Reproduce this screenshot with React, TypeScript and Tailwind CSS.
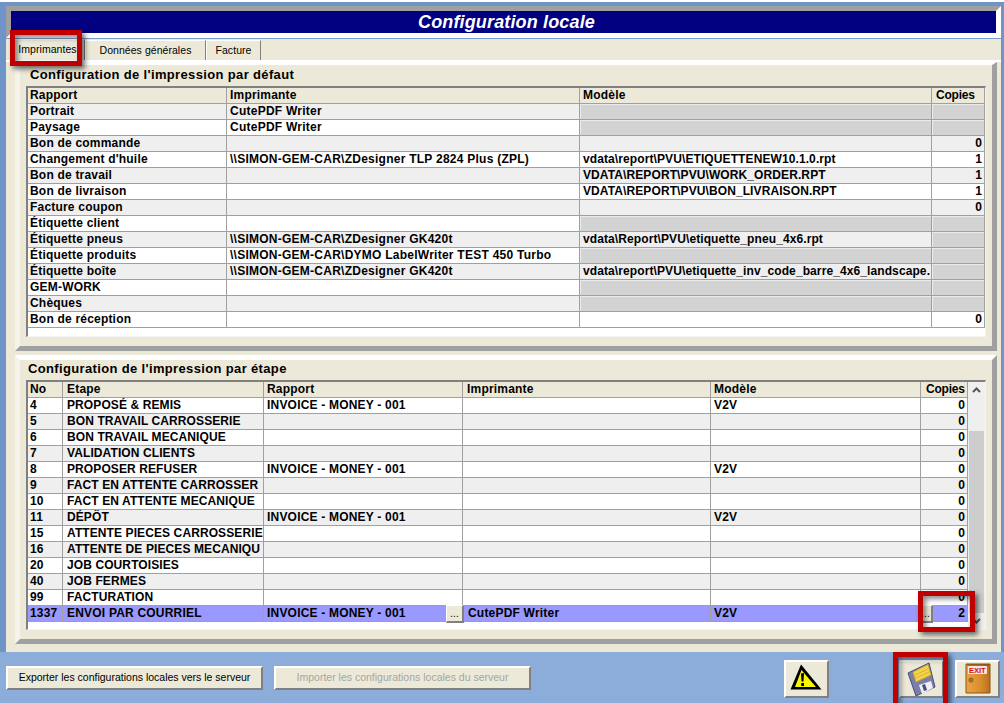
import React from 'react';

type Row = { name: string; printer?: string; model?: string; copies?: string; off?: boolean };

const defaultRows: Row[] = [
  { name: 'Portrait', printer: 'CutePDF Writer', off: true },
  { name: 'Paysage', printer: 'CutePDF Writer', off: true },
  { name: 'Bon de commande', copies: '0' },
  { name: "Changement d'huile", printer: '\\\\SIMON-GEM-CAR\\ZDesigner TLP 2824 Plus (ZPL)', model: 'vdata\\report\\PVU\\ETIQUETTENEW10.1.0.rpt', copies: '1' },
  { name: 'Bon de travail', model: 'VDATA\\REPORT\\PVU\\WORK_ORDER.RPT', copies: '1' },
  { name: 'Bon de livraison', model: 'VDATA\\REPORT\\PVU\\BON_LIVRAISON.RPT', copies: '1' },
  { name: 'Facture coupon', copies: '0' },
  { name: 'Étiquette client', off: true },
  { name: 'Étiquette pneus', printer: '\\\\SIMON-GEM-CAR\\ZDesigner GK420t', model: 'vdata\\Report\\PVU\\etiquette_pneu_4x6.rpt', off: true },
  { name: 'Étiquette produits', printer: '\\\\SIMON-GEM-CAR\\DYMO LabelWriter TEST 450 Turbo', off: true },
  { name: 'Étiquette boîte', printer: '\\\\SIMON-GEM-CAR\\ZDesigner GK420t', model: 'vdata\\report\\PVU\\etiquette_inv_code_barre_4x6_landscape.', off: true },
  { name: 'GEM-WORK', off: true },
  { name: 'Chèques', off: true },
  { name: 'Bon de réception', copies: '0' },
];

const stepRows = [
  ['4', 'PROPOSÉ & REMIS', 'INVOICE - MONEY - 001', 'V2V'],
  ['5', 'BON TRAVAIL CARROSSERIE', '', ''],
  ['6', 'BON TRAVAIL MECANIQUE', '', ''],
  ['7', 'VALIDATION CLIENTS', '', ''],
  ['8', 'PROPOSER REFUSER', 'INVOICE - MONEY - 001', 'V2V'],
  ['9', 'FACT EN ATTENTE CARROSSER', '', ''],
  ['10', 'FACT EN ATTENTE MECANIQUE', '', ''],
  ['11', 'DÉPÔT', 'INVOICE - MONEY - 001', 'V2V'],
  ['15', 'ATTENTE PIECES CARROSSERIE', '', ''],
  ['16', 'ATTENTE DE PIECES MECANIQU', '', ''],
  ['20', 'JOB COURTOISIES', '', ''],
  ['40', 'JOB FERMES', '', ''],
  ['99', 'FACTURATION', '', ''],
];

const cell = 'h-[16px] border-r border-b border-[#a0a0a0] px-[2px] leading-[15px] whitespace-nowrap overflow-hidden';
const offCell = 'bg-[#d3d3d3] shadow-[inset_1px_1px_0_#ebebeb]';
const gridOne = 'grid grid-cols-[199px_353px_352px_53px]';
const gridTwo = 'grid grid-cols-[35px_201px_199px_248px_210px_47px]';

function Group({ className, children }: { className: string; children: React.ReactNode }) {
  return (
    <div className={`flex flex-col border-[5px] border-t-white border-l-[#f6f4ea] border-r-[#a0a0a0] border-b-[#a0a0a0] ${className}`}>
      {children}
    </div>
  );
}

function DefaultTable() {
  return (
    <div className="mx-[6px] flex h-[251px] flex-col border-t-2 border-l-2 border-[#808080] bg-white border-r border-b border-r-[#f4f4f4] border-b-[#f4f4f4]">
      <div className={`${gridOne} bg-[#ece9d8]`}>
        <div className={cell}>Rapport</div>
        <div className={`${cell} !pl-[3px]`}>Imprimante</div>
        <div className={`${cell} !pl-[3px]`}>Modèle</div>
        <div className={`${cell} !pl-[4px] tracking-[-0.2px]`}>Copies</div>
      </div>
      {defaultRows.map((r, i) => (
        <div key={r.name} className={`${gridOne} ${i % 2 === 0 ? 'bg-[#efefef]' : 'bg-white'}`}>
          <div className={cell}>{r.name}</div>
          <div className={`${cell} !pl-[3px] tracking-[0.25px]`}>{r.printer}</div>
          <div className={`${cell} !pl-[3px] tracking-[0.1px] ${r.off && !r.model ? offCell : ''}`}>{r.model}</div>
          <div className={`${cell} text-right ${r.off ? offCell : ''}`}>{r.copies}</div>
        </div>
      ))}
    </div>
  );
}

function StepTable() {
  return (
    <div className="mx-[6px] flex h-[250px] border-t-2 border-l-2 border-[#808080] bg-white border-r border-b border-r-[#f4f4f4] border-b-[#f4f4f4]">
      <div className="flex w-[940px] flex-col">
        <div className={`${gridTwo} bg-[#ece9d8]`}>
          <div className={cell}>No</div>
          <div className={`${cell} !pl-[4px]`}>Etape</div>
          <div className={`${cell} !pl-[3px]`}>Rapport</div>
          <div className={`${cell} !pl-[4px]`}>Imprimante</div>
          <div className={`${cell} !pl-[3px]`}>Modèle</div>
          <div className={`${cell} !pl-[5px] tracking-[-0.2px]`}>Copies</div>
        </div>
        {stepRows.map((r, i) => (
          <div key={r[0]} className={`${gridTwo} ${i % 2 === 0 ? 'bg-white' : 'bg-[#efefef]'}`}>
            <div className={cell}>{r[0]}</div>
            <div className={`${cell} !pl-[4px] tracking-[0.1px]`}>{r[1]}</div>
            <div className={`${cell} !pl-[3px]`}>{r[2]}</div>
            <div className={cell}></div>
            <div className={`${cell} !pl-[3px]`}>{r[3]}</div>
            <div className={`${cell} text-right`}>0</div>
          </div>
        ))}
        <div className={`${gridTwo} bg-[#9999ff]`}>
          <div className={cell}>1337</div>
          <div className={`${cell} !pl-[4px]`}>ENVOI PAR COURRIEL</div>
          <div className={`${cell} relative !overflow-visible !pl-[3px]`}>
            INVOICE - MONEY - 001
            <EllipsisButton className="right-[-2px]" />
          </div>
          <div className={`${cell} !pl-[5px]`}>CutePDF Writer</div>
          <div className={`${cell} !pl-[3px]`}>V2V</div>
          <div className={`${cell} relative !overflow-visible text-right`}>
            <EllipsisButton className="left-[-2px] !w-[14px]" />
            2
          </div>
        </div>
      </div>
      <div className="flex w-[17px] flex-col bg-[#efefef]">
        <svg viewBox="0 0 17 16" className="h-[16px] w-[17px] shrink-0">
          <path d="M5 10 L8.5 6.5 L12 10" fill="none" stroke="#555" strokeWidth="2" />
        </svg>
        <div className="mt-[33px] ml-px h-[182px] w-[15px] shrink-0 bg-[#cdcdcd]" />
        <svg viewBox="0 0 17 16" className="h-[16px] w-[17px] shrink-0">
          <path d="M5 6 L8.5 9.5 L12 6" fill="none" stroke="#555" strokeWidth="2" />
        </svg>
      </div>
    </div>
  );
}

function EllipsisButton({ className }: { className: string }) {
  return (
    <div className={`absolute top-[-1px] z-10 flex h-[18px] w-[18px] items-end justify-center border-t border-l border-t-white border-l-white border-r-2 border-b-2 border-r-[#808080] border-b-[#808080] bg-[#ece9d8] text-[10px] leading-[14px] font-normal ${className}`}>
      ...
    </div>
  );
}

function Callout({ className }: { className: string }) {
  return (
    <div className={`pointer-events-none absolute z-20 border-[5px] border-[#c00000] shadow-[3px_3px_5px_rgba(0,0,0,0.55),inset_3px_3px_5px_rgba(0,0,0,0.45)] ${className}`} />
  );
}

function IconButton({ children }: { children: React.ReactNode }) {
  return (
    <div className="h-[38px] w-[45px] border-t-2 border-l-2 border-t-white border-l-white border-r-2 border-b-2 border-r-[#808080] border-b-[#808080] bg-[#ece9d8]">
      {children}
    </div>
  );
}

const bevel = 'border-t-2 border-l-2 border-t-white border-l-white border-r-2 border-b-2 border-r-[#808080] border-b-[#808080]';

export default function App() {
  return (
    <div className="relative flex h-[703px] w-[1004px] flex-col overflow-hidden border-t-2 border-t-white bg-[#6f94c8] font-['Liberation_Sans',Arial,sans-serif] text-[12px] font-bold tracking-[0.2px] text-black">
      <div className="ml-[6px] mt-[4px] w-[995px]">
        <div className="border-[5px] border-t-[#a0a0a0] border-l-[#a0a0a0] border-r-white border-b-white">
          <div className="flex h-[22px] items-center justify-center bg-[#000080] pt-[1px] pl-[6px] text-[18px] italic tracking-[0.15px] text-white">
            Configuration locale
          </div>
        </div>
        <div className="h-[614px] border-t border-t-[#7a9ccc] bg-[#ece9d8]">
          <div className="flex h-[21px] items-end pl-[5px] text-[10.5px] font-normal tracking-[0.05px]">
            <div className="flex h-[21px] w-[74px] items-center justify-center border-t border-t-white border-r border-r-[#808080]">Imprimantes</div>
            <div className="flex h-[20px] w-[121px] items-center justify-center border-t border-l border-t-white border-l-white border-r border-r-[#808080]">Données générales</div>
            <div className="flex h-[20px] w-[55px] items-center justify-center border-t border-l border-t-white border-l-white border-r border-r-[#808080]">Facture</div>
          </div>
          <div className="h-[2px] bg-white" />
          <Group className="ml-[9px] h-[289px] w-[982px] !border-t-[3px]">
            <div className="flex h-[21px] items-center pb-[2px] pl-[10px] text-[13px] tracking-[0.35px]">Configuration de l'impression par défaut</div>
            <DefaultTable />
          </Group>
          <Group className="ml-[9px] mt-[4px] h-[289px] w-[982px]">
            <div className="flex h-[20px] items-center pb-[2px] pl-[8px] text-[13px] tracking-[0.35px]">Configuration de l'impression par étape</div>
            <StepTable />
          </Group>
        </div>
      </div>

      <div className="flex flex-1 items-start whitespace-nowrap bg-[#8cadd9] pl-[6px] pt-[8px] text-[10.5px] font-normal tracking-normal">
        <div className={`mt-[6px] flex h-[24px] w-[257px] items-center justify-center ${bevel} bg-[#ece9d8]`}>
          Exporter les configurations locales vers le serveur
        </div>
        <div className={`ml-[11px] mt-[6px] flex h-[24px] w-[257px] items-center justify-center ${bevel} bg-[#ece9d8] text-[#a5a5a5]`}>
          Importer les configurations locales du serveur
        </div>
        <div className="ml-[253px]">
          <IconButton>
            <svg viewBox="0 0 41 34" className="h-[34px] w-[41px]">
              <path d="M15 2.5 L4.5 27.5 L35.5 27.5 Z" fill="#000" />
              <path d="M15.5 8 L9 25 L30 25 Z" fill="#f7f700" />
              <path d="M15 11.5 L18 11 L17.5 19.5 L15.5 19.5 Z M15.2 21 H18 V24 H15.2 Z" fill="#000" />
            </svg>
          </IconButton>
        </div>
        <div className="ml-[70px]">
          <IconButton>
            <svg viewBox="0 0 41 34" className="h-[34px] w-[41px]">
              <path d="M7 11 L28 1 L34 25 L15 34 Z" fill="#7b7ea8" stroke="#4a4c78" strokeWidth="1" />
              <path d="M12 10 L27 2.5 L30 13 L15 20 Z" fill="#f5d547" stroke="#c7a32a" strokeWidth="1" />
              <path d="M14 13 L27 7 M15 16 L28 10" stroke="#d9b230" strokeWidth="1" />
              <path d="M18 23 L30 19 L32 26 L21 32 Z" fill="#eeeef6" />
              <path d="M21 23 L24 22 L26 28 L23 29 Z" fill="#4a4c78" />
            </svg>
          </IconButton>
        </div>
        <div className="ml-[11px]">
          <IconButton>
            <svg viewBox="0 0 41 34" className="h-[34px] w-[41px]">
              <defs>
                <linearGradient id="door" x1="0" x2="1" y1="0" y2="0">
                  <stop offset="0" stopColor="#e9a544" />
                  <stop offset="0.6" stopColor="#d98e30" />
                  <stop offset="1" stopColor="#b86f1c" />
                </linearGradient>
              </defs>
              <path d="M9 2 H33 V31 H9 Z" fill="url(#door)" stroke="#8a5414" strokeWidth="1" />
              <path d="M10 3 H32" stroke="#6e4412" strokeWidth="1" />
              <rect x="11" y="4" width="19" height="8" rx="1" fill="#f6e3e3" />
              <text x="12" y="10.8" fontSize="7.5" fontWeight="700" fill="#d01010" fontFamily="Liberation Sans">EXIT</text>
              <circle cx="14" cy="18" r="2.2" fill="#a8702e" stroke="#7c4e18" strokeWidth="0.5" />
            </svg>
          </IconButton>
        </div>
      </div>

      <Callout className="left-[10px] top-[28px] h-[36px] w-[72px]" />
      <Callout className="left-[918px] top-[589px] h-[41px] w-[57px]" />
      <Callout className="left-[893px] top-[650px] h-[56px] w-[55px]" />
    </div>
  );
}
